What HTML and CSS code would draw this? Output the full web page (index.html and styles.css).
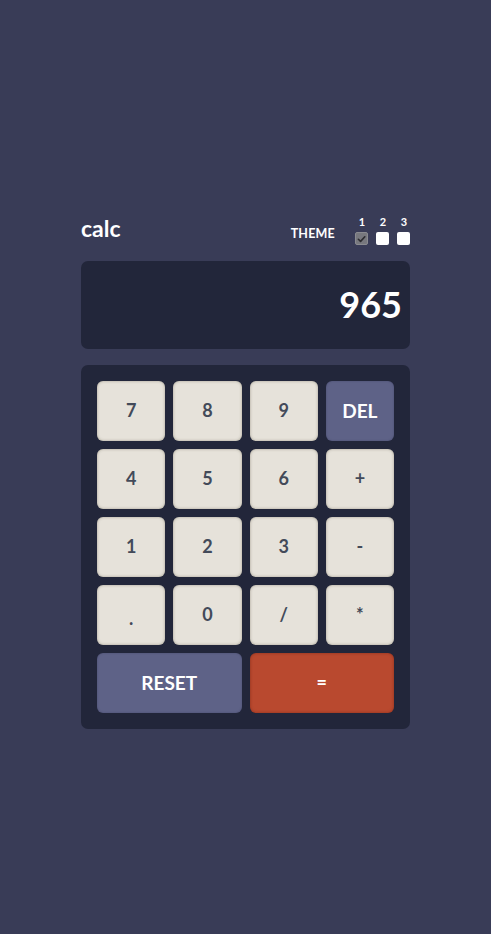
FILE: index.html
```html
<!DOCTYPE html>
<html lang="en">
<head>
<meta charset="utf-8">
<title>calc</title>
<link rel="stylesheet" href="styles.css">
</head>
<body>
<main class="calc">
  <header class="top">
    <h1 class="logo">calc</h1>
    <div class="theme">
      <span class="theme-label">THEME</span>
      <div class="toggles">
        <div class="toggle">
          <span class="num">1</span>
          <span class="box checked"><svg viewBox="0 0 12 12" width="12" height="12"><path d="M2.6 6.3 L5 8.6 L9.6 3.6" fill="none" stroke="#2c2c30" stroke-width="1.8" stroke-linecap="round" stroke-linejoin="round"/></svg></span>
        </div>
        <div class="toggle">
          <span class="num">2</span>
          <span class="box"></span>
        </div>
        <div class="toggle">
          <span class="num">3</span>
          <span class="box"></span>
        </div>
      </div>
    </div>
  </header>
  <section class="screen">965</section>
  <section class="keys">
    <button class="key">7</button>
    <button class="key">8</button>
    <button class="key">9</button>
    <button class="key alt">DEL</button>
    <button class="key">4</button>
    <button class="key">5</button>
    <button class="key">6</button>
    <button class="key">+</button>
    <button class="key">1</button>
    <button class="key">2</button>
    <button class="key">3</button>
    <button class="key">-</button>
    <button class="key dot">.</button>
    <button class="key">0</button>
    <button class="key">/</button>
    <button class="key">*</button>
    <button class="key alt wide">RESET</button>
    <button class="key eq wide">=</button>
  </section>
</main>
</body>
</html>
```
FILE: styles.css
```css
html, body {
  margin: 0;
  padding: 0;
}
body {
  background: #393c57;
  font-family: "Lato", "Open Sans", sans-serif;
  font-weight: 700;
  color: #fff;
  min-height: 934px;
}
.calc {
  width: 329px;
  margin: 0 auto;
  padding-top: 213px;
}
.top {
  display: flex;
  justify-content: space-between;
  align-items: flex-end;
  height: 32px;
  margin-bottom: 16px;
}
.logo {
  margin: 0 0 6px;
  font-size: 23px;
  line-height: 22px;
  font-weight: 700;
  letter-spacing: 0;
}
.theme {
  display: flex;
  align-items: flex-end;
  gap: 20px;
}
.theme-label {
  font-size: 12.5px;
  line-height: 12px;
  margin-bottom: 5px;
  letter-spacing: 0.2px;
}
.toggles {
  display: flex;
  gap: 8px;
}
.toggle {
  display: flex;
  flex-direction: column;
  align-items: center;
  gap: 5px;
}
.num {
  font-size: 11px;
  line-height: 11px;
  margin-left: 1px;
}
.box {
  display: block;
  width: 13px;
  height: 13px;
  border-radius: 2px;
  background: #fff;
  box-sizing: border-box;
}
.box.checked {
  background: #77787e;
  border: 1px solid #8a8b90;
  display: flex;
  align-items: center;
  justify-content: center;
}
.screen {
  height: 88px;
  box-sizing: border-box;
  background: #22263a;
  border-radius: 7px;
  display: flex;
  align-items: center;
  justify-content: flex-end;
  padding: 0 8px 2px 0;
  font-size: 36px;
  letter-spacing: 0;
  margin-bottom: 16px;
}
.keys {
  background: #22263a;
  border-radius: 7px;
  padding: 16px;
  display: grid;
  grid-template-columns: repeat(4, 1fr);
  grid-auto-rows: 60px;
  gap: 8px;
}
.key {
  border: none;
  border-radius: 6px;
  background: #e6e2da;
  box-shadow: inset 0 0 3px rgba(80, 70, 50, 0.45);
  color: #434a59;
  font-family: inherit;
  font-weight: 700;
  font-size: 18px;
  padding: 0 0 2px;
}
.key.dot {
  padding-top: 8px;
}
.key.alt {
  background: #5e6287;
  box-shadow: inset 0 0 2px rgba(30, 30, 60, 0.35);
  color: #fff;
  font-size: 19px;
}
.key.eq {
  background: #b9492f;
  box-shadow: inset 0 0 3px rgba(90, 20, 10, 0.5);
  color: #fff;
}
.key.wide {
  grid-column: span 2;
}
```
